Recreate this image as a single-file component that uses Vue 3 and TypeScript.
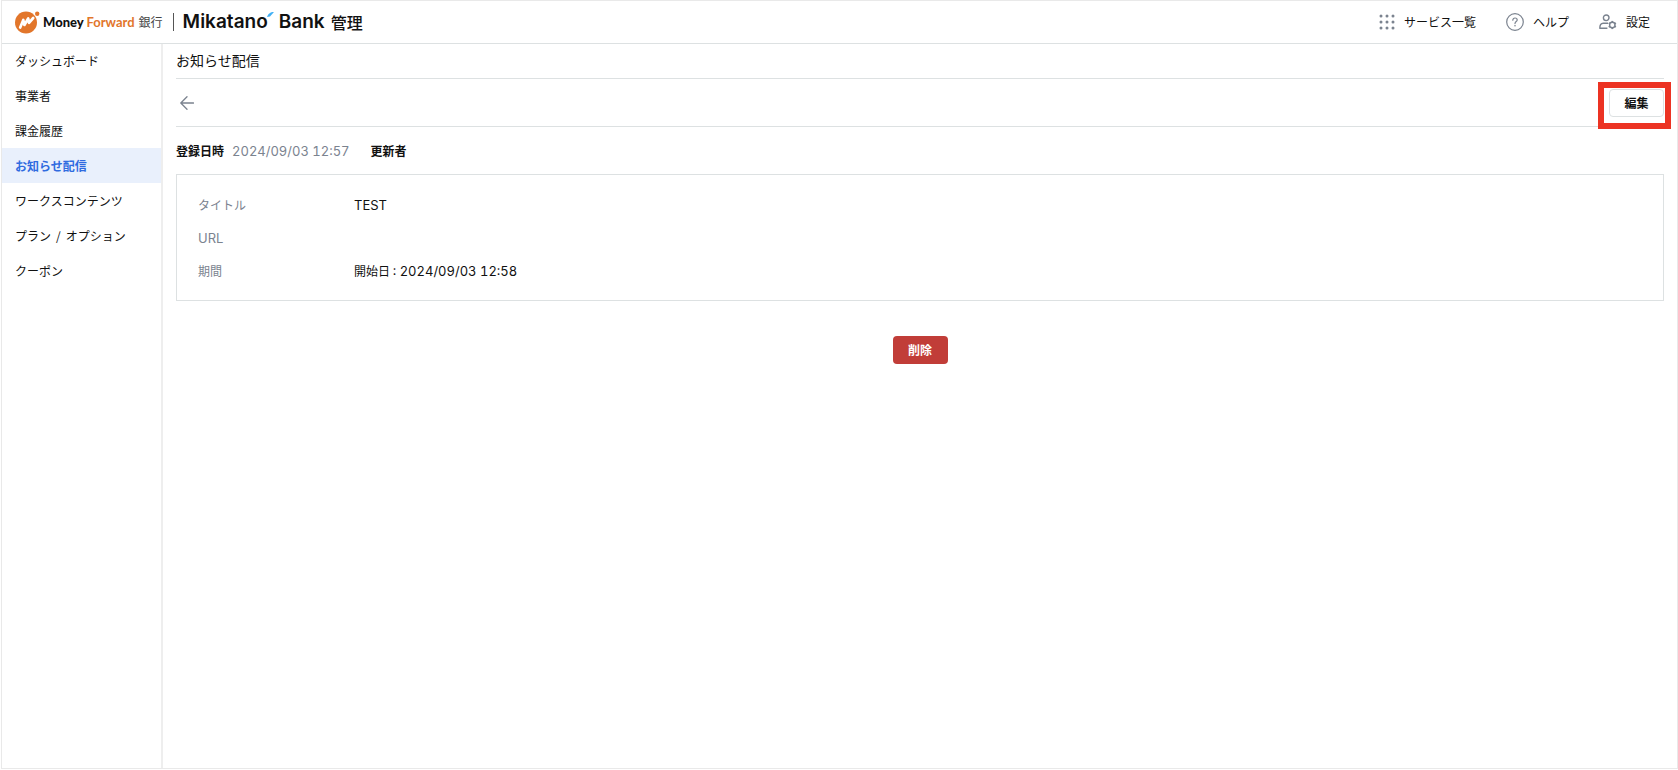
<script setup lang="ts">
interface NavItem {
  parts: string[]
  active?: boolean
}

const navItems: NavItem[] = [
  { parts: ['ダッシュボード'] },
  { parts: ['事業者'] },
  { parts: ['課金履歴'] },
  { parts: ['お知らせ配信'], active: true },
  { parts: ['ワークスコンテンツ'] },
  { parts: ['プラン', 'オプション'] },
  { parts: ['クーポン'] },
]

const dotPositions: number[] = [2, 8, 14]
const gearTeeth: number[] = [0, 60, 120, 180, 240, 300]
</script>

<template>
  <div class="frame">
    <header class="header">
      <a class="brand" href="#">
        <svg class="brand-mark" viewBox="0 0 26 24" aria-hidden="true">
          <circle cx="11" cy="12.500" r="11" fill="#e2762b" />
          <circle cx="22.200" cy="3.800" r="2.200" fill="#e2762b" />
          <path d="M5.200 17.500 8.300 10 9.400 15 13.200 8.500 14 12.800 18.200 8" fill="none" stroke="#fff" stroke-width="2.700" stroke-linejoin="round" stroke-linecap="round" />
        </svg>
        <span class="company">Money <span class="orange">Forward</span></span>
        <span class="ginko">銀行</span>
        <span class="divider"></span>
        <span class="product">Mikatano
          <svg class="accent" viewBox="0 0 7 5" aria-hidden="true"><path d="M0 5C1 2 3 0 7 0L3 4.500Z" fill="#41b0f5" /></svg>
        </span>
        <span class="product bank">Bank</span>
        <span class="admin">管理</span>
      </a>
      <nav class="tools" aria-label="ツール">
        <a class="tool" href="#">
          <svg class="icon grid-icon" viewBox="0 0 16 16" fill="#7b838f" aria-hidden="true">
            <template v-for="y in dotPositions" :key="y">
              <circle v-for="x in dotPositions" :key="x" :cx="x" :cy="y" r="1.500" />
            </template>
          </svg>
          サービス一覧
        </a>
        <a class="tool" href="#">
          <svg class="icon help-icon" viewBox="0 0 18 18" fill="none" stroke="#7b838f" aria-hidden="true">
            <circle cx="9" cy="9" r="8.300" stroke-width="1.200" />
            <path d="M6.800 7.200C6.800 5.800 7.700 5 9 5s2.200.8 2.200 2c0 1.500-2.200 1.700-2.200 3.600" stroke-width="1.200" stroke-linecap="round" />
            <circle cx="9" cy="12.800" r=".8" fill="#7b838f" stroke="none" />
          </svg>
          ヘルプ
        </a>
        <a class="tool" href="#">
          <svg class="icon user-icon" viewBox="0 0 18 16" fill="none" stroke="#7b838f" stroke-width="1.400" aria-hidden="true">
            <circle cx="7.200" cy="3.800" r="2.800" />
            <path d="M9 9.200H4.200C2 9.200.8 10.800.8 14.300H8.400" stroke-linejoin="round" />
            <circle cx="13.300" cy="11" r="2.700" />
            <path v-for="angle in gearTeeth" :key="angle" d="M13.300 8.200V6.900" stroke-width="1.800" :transform="`rotate(${angle} 13.3 11)`" />
          </svg>
          設定
        </a>
      </nav>
    </header>

    <div class="body">
      <nav class="sidebar" aria-label="メニュー">
        <a v-for="item in navItems" :key="item.parts[0]" href="#" class="nav-item" :class="{ active: item.active }">
          <template v-for="(part, i) in item.parts" :key="part"><span v-if="i > 0" class="slash">/</span>{{ part }}</template>
        </a>
      </nav>

      <main class="main">
        <h1 class="title">お知らせ配信</h1>
        <div class="toolbar">
          <button class="back" type="button" aria-label="戻る">
            <svg viewBox="0 0 14 14" aria-hidden="true">
              <path d="M13.500 7H1M7 .8.800 7 7 13.200" fill="none" stroke="#7b838f" stroke-width="1.300" stroke-linecap="round" stroke-linejoin="round" />
            </svg>
          </button>
          <div class="edit-wrap">
            <button class="edit" type="button">編集</button>
            <span class="highlight"></span>
          </div>
        </div>
        <div class="meta">
          <b>登録日時</b>
          <span class="latin muted">2024/09/03 12:57</span>
          <b class="updater">更新者</b>
        </div>
        <dl class="card">
          <dt>タイトル</dt>
          <dd class="latin">TEST</dd>
          <dt class="latin">URL</dt>
          <dd></dd>
          <dt>期間</dt>
          <dd>開始日 <span class="latin">: 2024/09/03 12:58</span></dd>
        </dl>
        <button class="delete" type="button">削除</button>
      </main>
    </div>
  </div>
</template>

<style>
body {
  margin: 0;
  background: #fff;
}
</style>

<style scoped>
.frame {
  box-sizing: border-box;
  min-height: calc(100vh - 1px);
  margin-left: 1px;
  display: flex;
  flex-direction: column;
  border: 1px solid #e9e9e9;
  font-family: "Noto Sans CJK JP", sans-serif;
  font-size: 12px;
  line-height: 20px;
  color: #111;
}
a {
  color: inherit;
  text-decoration: none;
}
button {
  box-sizing: border-box;
  font: inherit;
  cursor: pointer;
}
.header {
  position: relative;
  height: 42px;
  box-shadow: 0 1px #dde1e2;
  display: flex;
  align-items: center;
  justify-content: space-between;
  padding: 0 27px 0 13px;
}
.brand,
.tools,
.tool {
  display: flex;
  align-items: center;
}
.brand-mark {
  width: 26px;
  height: 24px;
}
.company {
  margin-left: 2px;
  font-family: Lato, sans-serif;
  font-size: 13px;
  font-weight: 900;
}
.orange {
  color: #e2762b;
  font-weight: 700;
}
.ginko {
  margin-left: 4px;
  color: #444;
}
.divider {
  width: 1px;
  height: 18px;
  margin: 0 9px 0 10px;
  background: #555;
}
.product {
  position: relative;
  font-family: Inter, sans-serif;
  font-size: 19px;
  font-weight: 600;
}
.bank {
  margin: 0 6px 0 11px;
}
.accent {
  position: absolute;
  top: 0;
  right: -6px;
  width: 7px;
  height: 5px;
}
.admin {
  font-size: 16px;
  font-weight: 500;
}
.tools {
  gap: 30px;
}
.tool {
  gap: 9px;
}
.grid-icon {
  width: 16px;
  height: 16px;
}
.help-icon {
  width: 18px;
  height: 18px;
}
.user-icon {
  width: 18px;
  height: 16px;
}
.body {
  flex: 1;
  display: flex;
}
.sidebar {
  flex: none;
  width: 159px;
  border-right: 2px solid #eee;
}
.nav-item {
  display: block;
  padding-left: 13px;
  line-height: 35px;
}
.nav-item.active {
  background: #e9f0fc;
  color: #2f6be0;
  font-weight: 700;
}
.slash {
  padding: 0 5px;
}
.main {
  flex: 1;
  padding: 0 13px;
  display: flex;
  flex-direction: column;
}
.title {
  margin: 0;
  border-bottom: 1px solid #dde1e2;
  font-size: 14px;
  font-weight: 400;
  line-height: 35px;
}
.toolbar {
  height: 47px;
  border-bottom: 1px solid #dde1e2;
  display: flex;
  align-items: center;
  justify-content: space-between;
}
.back {
  display: flex;
  padding: 4px;
  border: 0;
  background: none;
}
.back svg {
  width: 14px;
  height: 14px;
}
.edit-wrap {
  position: relative;
}
.edit {
  display: block;
  width: 55px;
  height: 28px;
  padding: 0;
  border: 1px solid #dde1e2;
  border-radius: 4px;
  background: #fff;
  color: #111;
  font-weight: 700;
}
.highlight {
  position: absolute;
  inset: -7px -7px -12px -11px;
  border: 6px solid #ec3323;
  pointer-events: none;
}
.meta {
  height: 47px;
  display: flex;
  align-items: center;
  gap: 8px;
}
.updater {
  margin-left: 13px;
}
.latin {
  font-family: Inter, sans-serif;
  font-size: 13px;
  font-variant-numeric: tabular-nums;
}
.muted,
dt {
  color: #7b838f;
}
.card {
  margin: 0;
  padding: 20px 21px 19px;
  border: 1px solid #dde1e2;
  display: grid;
  grid-template-columns: 156px 1fr;
  grid-auto-rows: 20px;
  row-gap: 13px;
}
dd {
  margin: 0;
}
.delete {
  align-self: center;
  width: 55px;
  height: 28px;
  margin-top: 35px;
  padding: 0;
  border: 0;
  border-radius: 4px;
  background: #c13d38;
  color: #fff;
  font-weight: 700;
}
</style>
